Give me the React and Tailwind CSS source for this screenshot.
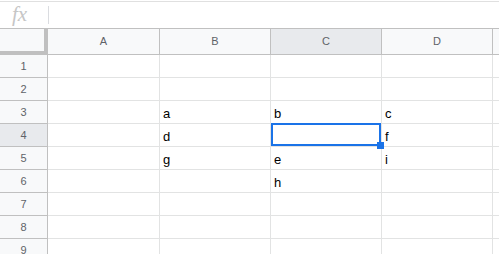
import React from "react";

const colHeaders = [
  { l: "A", cls: "w-[112px] bg-[#f8f9fa]" },
  { l: "B", cls: "w-[111px] bg-[#f8f9fa]" },
  { l: "C", cls: "w-[111px] bg-[#e8eaed]" },
  { l: "D", cls: "w-[111px] bg-[#f8f9fa]" },
];

const colW = ["w-[112px]", "w-[111px]", "w-[111px]", "w-[111px]"];

const rows = [
  ["", "", "", ""],
  ["", "", "", ""],
  ["", "a", "b", "c"],
  ["", "d", "", "f"],
  ["", "g", "e", "i"],
  ["", "", "h", ""],
  ["", "", "", ""],
  ["", "", "", ""],
  ["", "", "", ""],
];

export default function App() {
  return (
    <div
      className="w-[499px] h-[254px] overflow-hidden bg-white"
      style={{ fontFamily: '"Liberation Sans", Arial, sans-serif' }}
    >
      {/* formula bar */}
      <div className="h-px" />
      <div className="h-[27px] border-t border-[#e0e0e0] flex items-center">
        <div className="w-[48px] pl-[12px] flex items-center">
          <span
            className="italic text-[21px] leading-none text-[#c6c6c6] -mt-[2px]"
            style={{ fontFamily: '"Liberation Serif", "Times New Roman", serif' }}
          >
            fx
          </span>
        </div>
        <div className="w-px h-[18px] bg-[#dadce0]" />
      </div>

      {/* header row */}
      <div className="flex h-[27px] border-t border-[#c0c0c0]">
        <div className="w-[48px] h-full bg-[#f8f9fa] border-r-4 border-b-4 border-[#c0c0c0]" />
        {colHeaders.map((c) => (
          <div
            key={c.l}
            className={`${c.cls} h-full border-r border-b border-[#c0c0c0] flex items-center justify-center text-[11px] text-[#5f6368]`}
          >
            {c.l}
          </div>
        ))}
        <div className="flex-1 h-full bg-[#f8f9fa] border-b border-[#c0c0c0]" />
      </div>

      {/* body */}
      <div className="relative">
        {rows.map((r, i) => (
          <div key={i} className="flex h-[23px]">
            <div
              className={`w-[48px] h-full border-r border-b border-[#c0c0c0] flex items-center justify-center text-[11px] text-[#5f6368] ${
                i === 3 ? "bg-[#e8eaed]" : "bg-[#f8f9fa]"
              }`}
            >
              {i + 1}
            </div>
            {r.map((v, j) => (
              <div
                key={j}
                className={`${colW[j]} h-full border-r border-b border-[#e2e3e3] flex items-center pl-[3px] pt-[3px] text-[13px] text-black`}
              >
                {v}
              </div>
            ))}
            <div className="flex-1 h-full border-b border-[#e2e3e3]" />
          </div>
        ))}

        {/* selection */}
        <div className="absolute left-[271px] top-[68px] w-[110px] h-[23px] border-2 border-[#1a73e8]" />
        <div className="absolute left-[377px] top-[87px] w-[7px] h-[7px] bg-[#1a73e8]" />
      </div>
    </div>
  );
}
